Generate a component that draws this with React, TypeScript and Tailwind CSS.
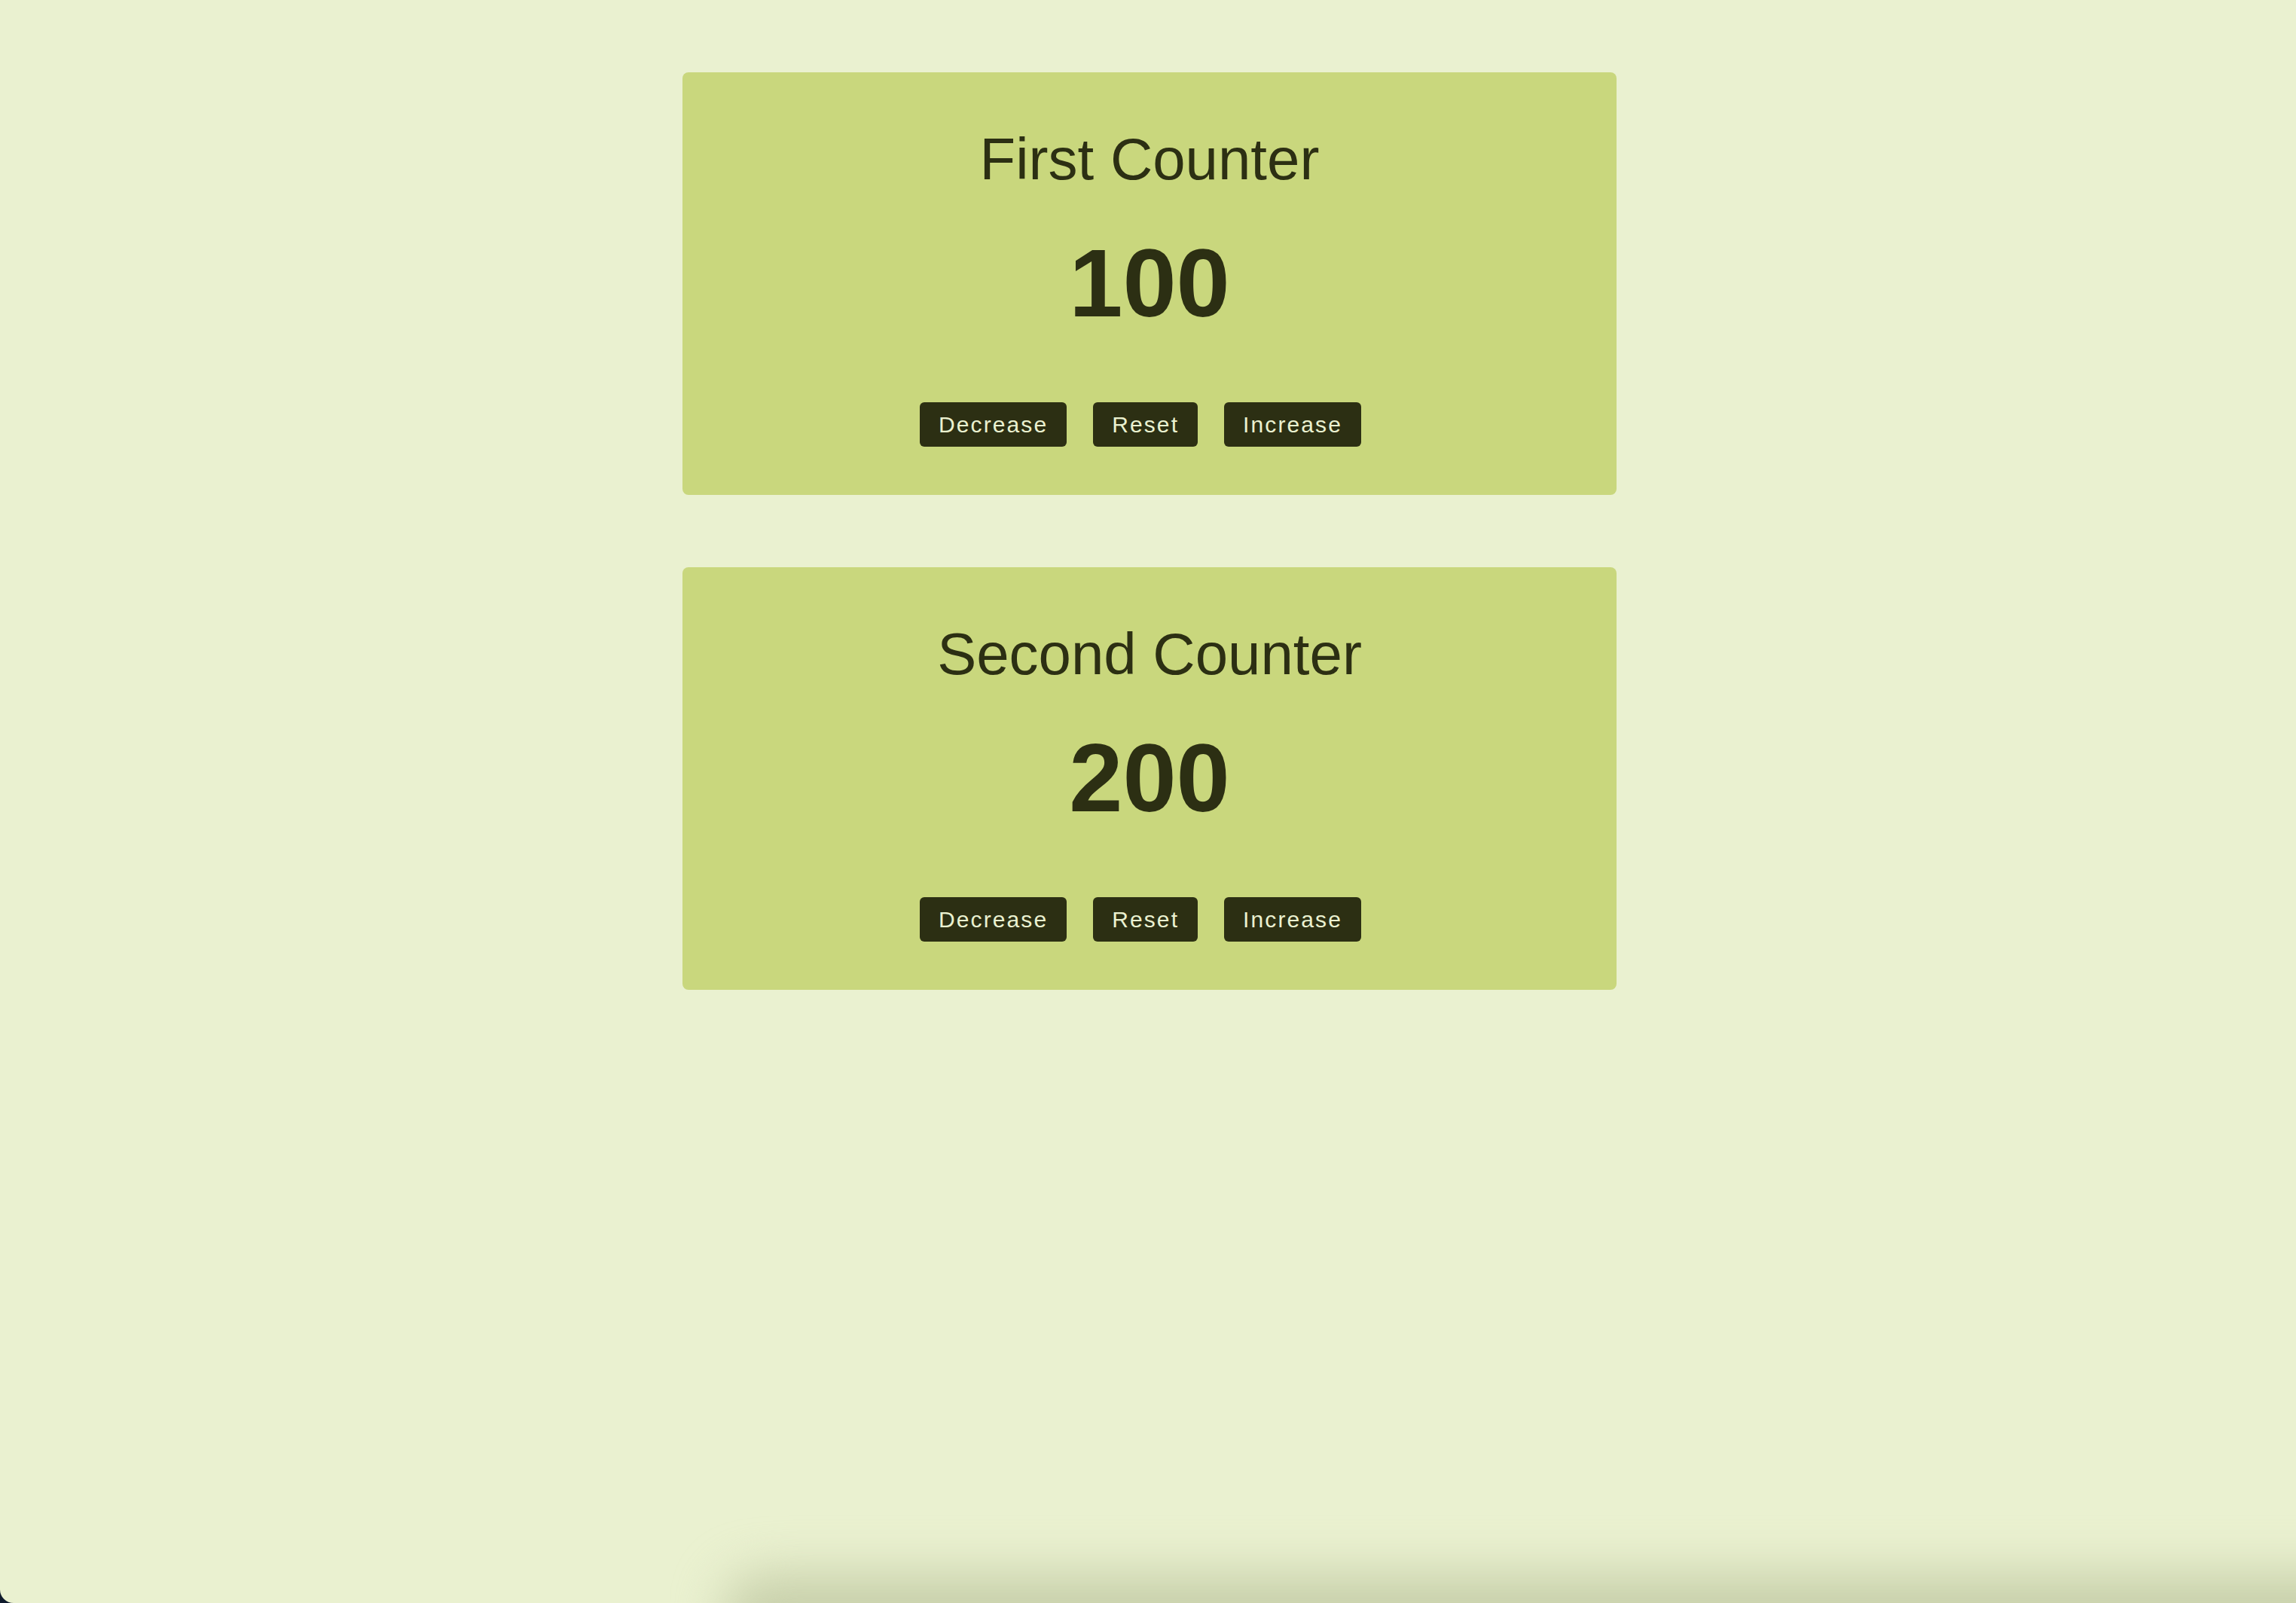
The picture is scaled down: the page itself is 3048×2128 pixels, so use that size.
import { useState } from "react";

type CounterProps = {
  title: string;
  initial: number;
};

function Counter({ title, initial }: CounterProps) {
  const [count, setCount] = useState(initial);

  const btn =
    "flex h-[59px] items-center rounded-md bg-[#2c2f13] px-[25px] text-[30px] leading-none tracking-[0.07em] text-[#eaf1d0]";

  return (
    <section className="flex w-[1240px] flex-col items-center rounded-lg bg-[#c9d77d] pb-[64px] pt-[76px] text-[#2c2f13]">
      <h1 className="text-[78px] font-normal leading-none">{title}</h1>
      <p className="mt-[62px] text-[128px] font-bold leading-none">{count}</p>
      <div className="mt-[94px] flex gap-[35px] pr-[24px]">
        <button type="button" className={btn} onClick={() => setCount((c) => c - 1)}>
          Decrease
        </button>
        <button type="button" className={btn} onClick={() => setCount(initial)}>
          Reset
        </button>
        <button type="button" className={btn} onClick={() => setCount((c) => c + 1)}>
          Increase
        </button>
      </div>
    </section>
  );
}

export default function App() {
  return (
    <div className="relative h-screen overflow-hidden bg-[#0f1a2c] font-['Liberation_Sans',Arial,sans-serif]">
      <div className="relative h-full overflow-hidden rounded-bl-[18px] bg-[#eaf1d0]">
        <main className="flex flex-col items-center gap-[96px] pl-[4px] pt-[96px]">
          <Counter title="First Counter" initial={100} />
          <Counter title="Second Counter" initial={200} />
        </main>
        {/* soft shadow along the bottom edge */}
        <div className="pointer-events-none absolute bottom-[-70px] left-[960px] right-[-200px] h-[110px] rounded-[60px] bg-[#c8d0ab] blur-[32px]" />
      </div>
    </div>
  );
}
